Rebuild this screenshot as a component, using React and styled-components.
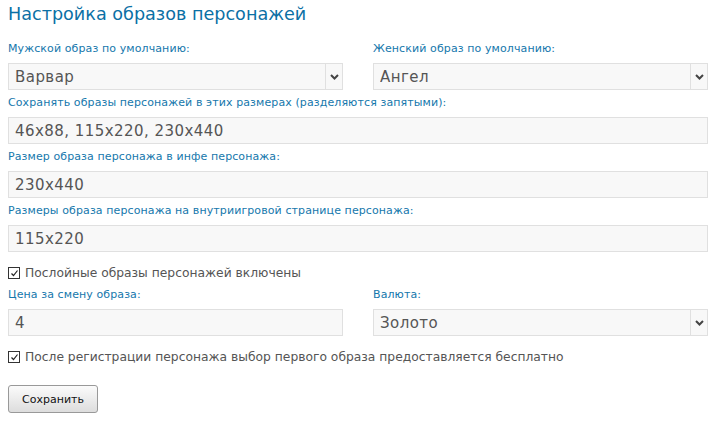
import React from 'react'
import styled, { createGlobalStyle } from 'styled-components'

const Global = createGlobalStyle`
  body{
    margin:0;
    background:#fff;
    font-family:"DejaVu Sans", Verdana, sans-serif;
  }
`

function Select({ value }) {
  return (
    <SelectWrap>
      <SelectBox defaultValue={value}>
        <option>{value}</option>
      </SelectBox>
      <Arrow>
        <svg width="9" height="6" viewBox="0 0 9 6">
          <path d="M1 1 L4.5 4.5 L8 1" stroke="#444" strokeWidth="2" fill="none" />
        </svg>
      </Arrow>
    </SelectWrap>
  )
}

function Check({ children }) {
  return (
    <CheckRow>
      <Box>
        <svg width="9" height="9" viewBox="0 0 9 9">
          <path d="M1.5 4.5 L3.5 6.5 L7.5 1.5" stroke="#222" strokeWidth="1.2" fill="none" />
        </svg>
      </Box>
      <span>{children}</span>
    </CheckRow>
  )
}

function App() {
  return (
    <Page>
      <Global />
      <Title>Настройка образов персонажей</Title>
      <Cols>
        <Field>
          <Label>Мужской образ по умолчанию:</Label>
          <Select value="Варвар" />
        </Field>
        <Field>
          <Label>Женский образ по умолчанию:</Label>
          <Select value="Ангел" />
        </Field>
      </Cols>
      <Field>
        <Label>Сохранять образы персонажей в этих размерах (разделяются запятыми):</Label>
        <Input defaultValue="46x88, 115x220, 230x440" />
      </Field>
      <Field>
        <Label>Размер образа персонажа в инфе персонажа:</Label>
        <Input defaultValue="230x440" />
      </Field>
      <Field>
        <Label>Размеры образа персонажа на внутриигровой странице персонажа:</Label>
        <Input defaultValue="115x220" />
      </Field>
      <Check>Послойные образы персонажей включены</Check>
      <Cols>
        <Field>
          <Label>Цена за смену образа:</Label>
          <Input defaultValue="4" />
        </Field>
        <Field>
          <Label>Валюта:</Label>
          <Select value="Золото" />
        </Field>
      </Cols>
      <Check>После регистрации персонажа выбор первого образа предоставляется бесплатно</Check>
      <Button>Сохранить</Button>
    </Page>
  )
}

export default App

const Page = styled.div`
  width:700px;
  padding:3px 8px 0;
`
const Title = styled.h1`
  margin:0 0 11px;
  font-size:17.6px;
  font-weight:normal;
  color:#0b70a5;
  line-height:22px;
`
const Cols = styled.div`
  display:grid;
  grid-template-columns:335px 335px;
  column-gap:30px;
`
const Field = styled.div`
  display:flex;
  flex-direction:column;
`
const Label = styled.label`
  font-size:11px;
  color:#1577ac;
  line-height:14px;
  padding:6px 0 7px;
  letter-spacing:0.1px;
`
const Input = styled.input`
  box-sizing:border-box;
  height:27px;
  width:100%;
  border:1px solid #e0e0e0;
  background:#f8f8f8;
  padding:0 6px;
  font-family:"DejaVu Sans", sans-serif;
  font-size:15px;
  letter-spacing:0.45px;
  color:#555;
  outline:none;
`
const SelectWrap = styled.div`
  position:relative;
  height:27px;
`
const SelectBox = styled.select`
  appearance:none;
  box-sizing:border-box;
  width:100%;
  height:27px;
  border:1px solid #e0e0e0;
  background:#f8f8f8;
  padding:0 6px;
  font-family:"DejaVu Sans", sans-serif;
  font-size:15px;
  letter-spacing:0.45px;
  color:#555;
  outline:none;
`
const Arrow = styled.span`
  position:absolute;
  top:1px;
  right:1px;
  bottom:1px;
  width:16px;
  border-left:1px solid #e0e0e0;
  display:flex;
  align-items:center;
  justify-content:center;
`
const CheckRow = styled.div`
  display:flex;
  align-items:center;
  gap:5px;
  font-size:12.3px;
  color:#555;
  height:18px;
  margin:12px 0 0;
`
const Box = styled.span`
  width:10px;
  height:10px;
  border:1px solid #333;
  background:#fff;
  display:flex;
  align-items:center;
  justify-content:center;
`
const Button = styled.button`
  margin-top:19px;
  width:90px;
  height:28px;
  border:1px solid #999;
  border-radius:3px;
  background:linear-gradient(#fbfbfb, #ddd);
  font-family:"DejaVu Sans", sans-serif;
  font-size:11px;
  color:#111;
`
